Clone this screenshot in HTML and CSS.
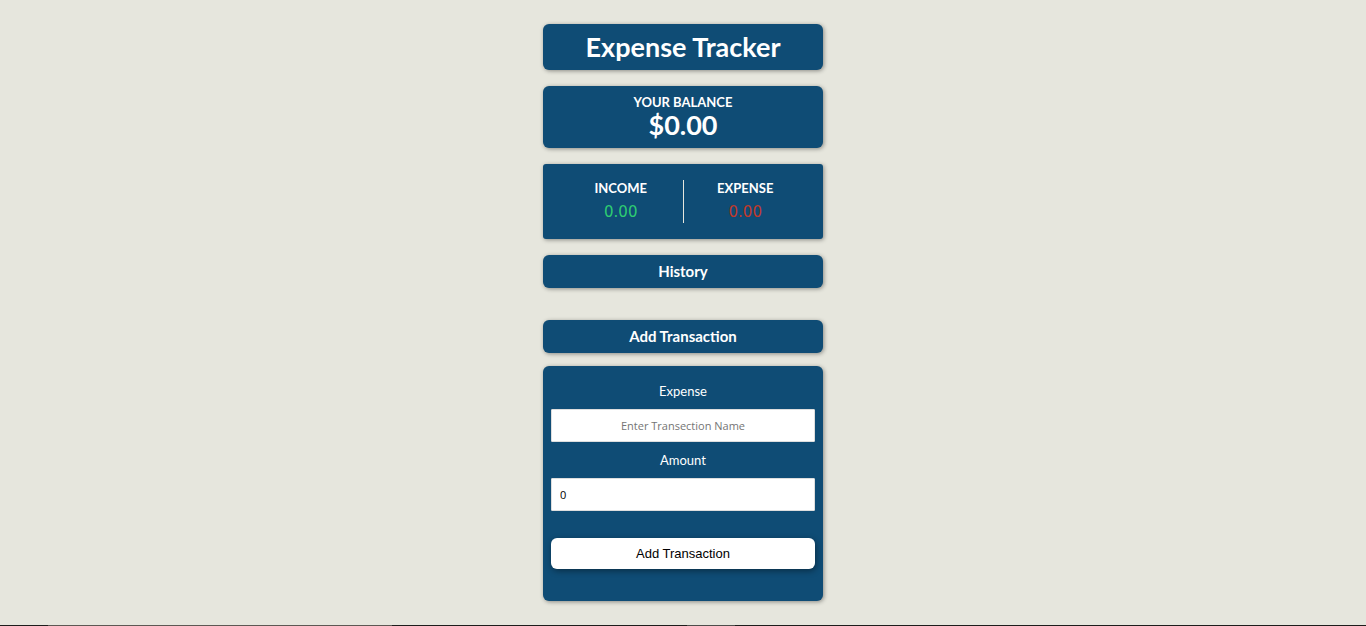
FILE: index.html
```html
<!DOCTYPE html>
<html lang="en">
<head>
<meta charset="utf-8">
<title>Expense Tracker</title>
<link rel="stylesheet" href="styles.css">
</head>
<body>
<main class="tracker">
  <h1 class="panel title">Expense Tracker</h1>
  <section class="panel balance">
    <h2 class="caption">YOUR BALANCE</h2>
    <p class="total">$0.00</p>
  </section>
  <section class="panel summary">
    <div class="summary-item">
      <h3 class="caption">INCOME</h3>
      <p class="money income">0.00</p>
    </div>
    <div class="summary-item">
      <h3 class="caption">EXPENSE</h3>
      <p class="money expense">0.00</p>
    </div>
  </section>
  <h2 class="panel heading">History</h2>
  <ul class="history"></ul>
  <h2 class="panel heading">Add Transaction</h2>
  <form class="panel form">
    <label class="label" for="name">Expense</label>
    <input class="field field-name" id="name" type="text" placeholder="Enter Transection Name">
    <label class="label" for="amount">Amount</label>
    <input class="field" id="amount" type="text" inputmode="numeric" value="0">
    <button class="submit" type="button">Add Transaction</button>
  </form>
</main>
<footer class="strip">
  <span class="strip-start"></span><span class="strip-search"></span><span class="strip-icons"></span><span class="strip-active"></span>
</footer>
</body>
</html>
```
FILE: styles.css
```css
* { box-sizing: border-box; }
html, body { height: 100%; }
body {
  margin: 0;
  display: flex;
  flex-direction: column;
  align-items: center;
  background: #e6e6dd;
  color: #fff;
  font-family: Lato, sans-serif;
}
h1, h2, h3, p, ul { margin: 0; padding: 0; }
.tracker {
  flex: 1;
  width: 100%;
  max-width: 280px;
  padding: 24px 0;
}
.panel {
  margin-bottom: 16px;
  background: #0f4c75;
  border-radius: 6px;
  box-shadow: 1px 1px 4px rgba(0, 0, 0, 0.4);
  text-align: center;
}
.title { padding: 6px 0; font-size: 27px; line-height: 34px; }
.balance { padding: 8px 0; }
.caption { font-size: 13px; line-height: 16px; font-weight: 700; }
.total { font-size: 27px; line-height: 30px; font-weight: 700; }
.summary {
  display: flex;
  justify-content: center;
  padding: 16px;
  border-radius: 3px;
}
.summary-item { flex: 1; }
.summary-item + .summary-item { border-left: 1px solid #e6e6dd; }
.money { padding-top: 6px; font: 15px/21px "DejaVu Sans", sans-serif; }
.income { color: #2ecc71; }
.expense { color: #c0392b; }
.heading { padding: 6px 0; font-size: 15px; line-height: 21px; font-weight: 700; }
.history { height: 16px; list-style: none; }
.form {
  display: flex;
  flex-direction: column;
  margin: -3px 0 0;
  padding: 16px 8px 32px;
}
.label {
  font-size: 13px;
  line-height: 18px;
  margin-bottom: 9px;
}
.field {
  height: 33px;
  margin-bottom: 9px;
  padding: 8px;
  border: 1px solid #dedede;
  border-radius: 1px;
  background: #fff;
  color: #000;
  font: 11px/15px "Open Sans", sans-serif;
}
.field-name { text-align: center; }
.field::placeholder { color: #757575; opacity: 1; }
.submit {
  height: 31px;
  margin-top: 18px;
  border: 0;
  border-radius: 6px;
  background: #fff;
  color: #000;
  font: 13px/16px "Liberation Sans", sans-serif;
  box-shadow: 1px 2px 6px rgba(0, 0, 0, 0.4);
}
.strip { display: flex; width: 100%; height: 1px; background: #1d1d1b; }
.strip-start { width: 48px; }
.strip-search { width: 344px; background: #5d5853; }
.strip-icons { width: 295px; }
.strip-active { width: 48px; background: #4d4d4a; }
```
